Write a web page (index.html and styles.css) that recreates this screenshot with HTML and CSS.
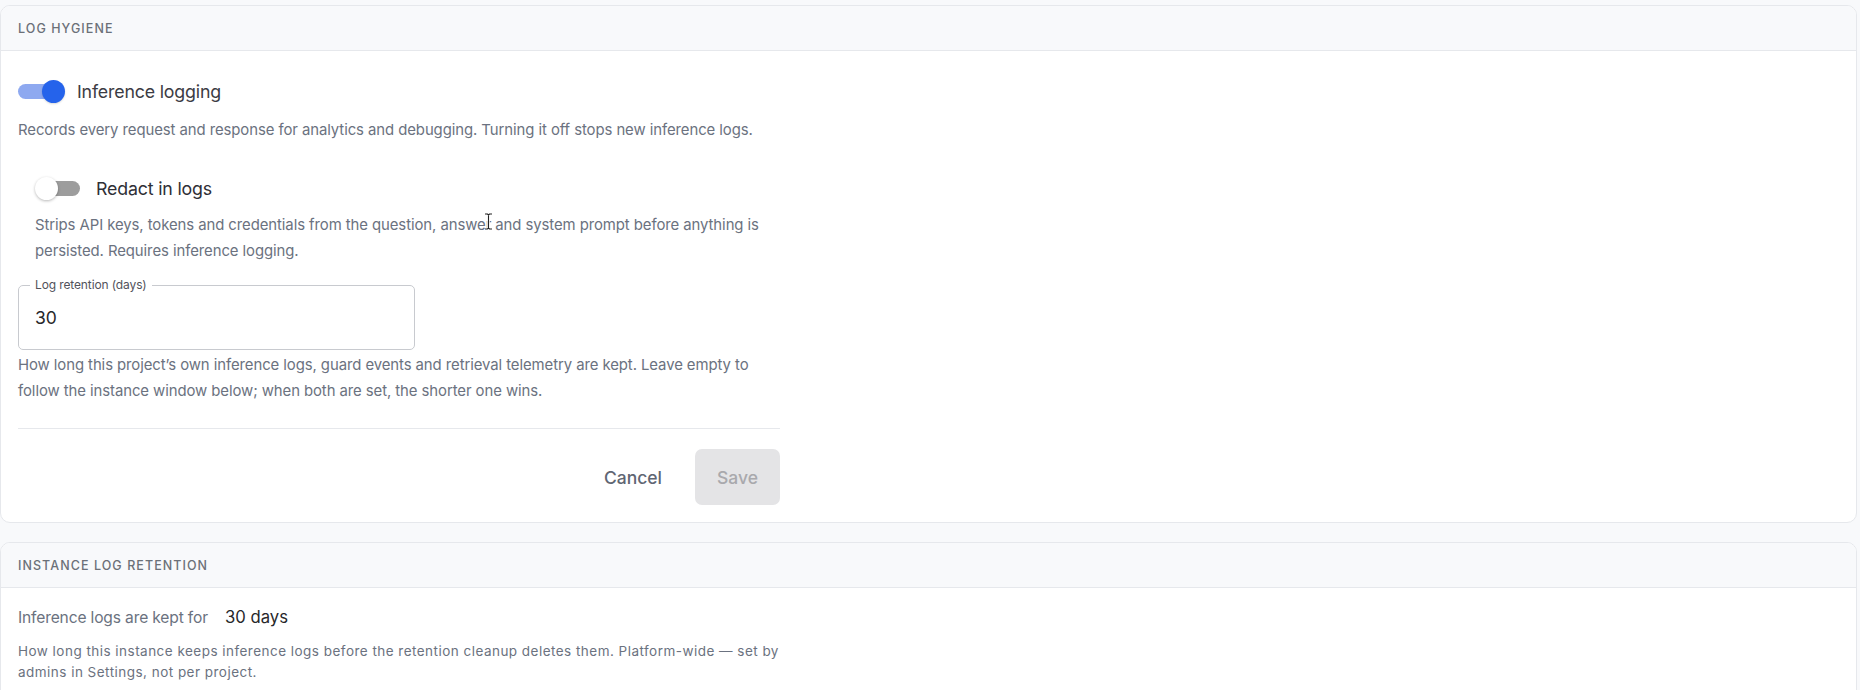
FILE: index.html
```html
<!DOCTYPE html>
<html lang="en">
<head>
<meta charset="utf-8">
<title>Log hygiene</title>
<link rel="stylesheet" href="styles.css">
</head>
<body>
<section class="card card-first">
  <header class="card-head">Log hygiene</header>
  <div class="card-body">
    <div class="col">
      <label class="switch-row">
        <span class="switch on"><span class="track"></span><span class="knob"></span></span>
        <span class="switch-label">Inference logging</span>
      </label>
      <p class="desc desc-main">Records every request and response for analytics and debugging. Turning it off stops new inference logs.</p>

      <div class="sub">
        <label class="switch-row">
          <span class="switch off"><span class="track"></span><span class="knob"></span></span>
          <span class="switch-label sub-label">Redact in logs</span>
        </label>
        <p class="desc desc-sub">Strips API keys, tokens and credentials from the question, answer and system prompt before anything is persisted. Requires inference logging.</p>
      </div>

      <fieldset class="field">
        <legend>Log retention (days)</legend>
        <input class="field-input" type="text" value="30">
      </fieldset>
      <p class="desc help">How long this project’s own inference logs, guard events and retrieval telemetry are kept. Leave empty to follow the instance window below; when both are set, the shorter one wins.</p>

      <div class="actions">
        <button class="btn btn-cancel" type="button">Cancel</button>
        <button class="btn btn-save" type="button" disabled>Save</button>
      </div>
    </div>
  </div>
</section>

<section class="card card-second">
  <header class="card-head">Instance log retention</header>
  <div class="card-body body-second">
    <div class="kept"><span class="kept-label">Inference logs are kept for</span><span class="kept-value">30 days</span></div>
    <p class="small">How long this instance keeps inference logs before the retention cleanup deletes them. Platform-wide — set by admins in Settings, not per project.</p>
  </div>
</section>

<svg class="cursor" width="9" height="17" viewBox="0 0 9 17" aria-hidden="true">
  <path d="M1 1h2.5L4.5 2l1-1H8M4.5 2v13M1 16h2.5l1-1 1 1H8" fill="none" stroke="#ffffff" stroke-width="2.6"/>
  <path d="M1 1h2.5L4.5 2l1-1H8M4.5 2v13M1 16h2.5l1-1 1 1H8" fill="none" stroke="#222222" stroke-width="1.1"/>
</svg>
</body>
</html>
```

FILE: styles.css
```css
* { box-sizing: border-box; }

html, body {
  margin: 0;
  padding: 0;
}

body {
  position: relative;
  background: #f8f9fb;
  font-family: Inter, "Noto Sans", "Liberation Sans", sans-serif;
  color: #3f3f46;
  width: 1860px;
  height: 690px;
  overflow: hidden;
}

.card {
  background: #ffffff;
  border: 1px solid #e6e8ec;
  border-radius: 10px;
  width: 1857px;
  overflow: hidden;
}

.card-first { margin-top: 5px; }
.card-second { margin-top: 19px; }

.card-head {
  height: 45px;
  background: #f8f9fb;
  border-bottom: 1px solid #e6e8ec;
  padding-left: 17px;
  display: flex;
  align-items: center;
  font-size: 12.5px;
  font-weight: 500;
  letter-spacing: 0.085em;
  text-transform: uppercase;
  color: #6b7078;
}

.card-body {
  padding: 29px 17px 17px;
}

.col {
  width: 762px;
}

.switch-row {
  display: flex;
  align-items: center;
  height: 23px;
}

.switch {
  position: relative;
  width: 47px;
  height: 23px;
  flex: none;
  margin-right: 12px;
}

.switch .track {
  position: absolute;
  left: 0;
  right: 3px;
  top: 4px;
  height: 15px;
  border-radius: 8px;
}

.switch .knob {
  position: absolute;
  top: 0;
  width: 23px;
  height: 23px;
  border-radius: 50%;
}

.switch.on .track { background: #8ea9f0; }
.switch.on .knob { right: 0; background: #2563eb; box-shadow: 0 1px 2px rgba(0,0,0,0.15); }

.switch.off { width: 45px; margin-right: 16px; }
.switch.off .track { left: 4px; right: 0; background: #9d9d9d; }
.switch.off .knob { left: 0; background: #ffffff; box-shadow: 0 1px 3px rgba(0,0,0,0.28); }

.switch-label {
  font-size: 17.8px;
  color: #3c3c44;
  letter-spacing: -0.01em;
}

.sub-label { color: #2f2f36; }

.desc {
  margin: 0;
  font-size: 14.9px;
  line-height: 26px;
  color: #6b7280;
  letter-spacing: -0.005em;
}

.desc-main { margin-top: 14px; }

.sub {
  margin-top: 34px;
  padding-left: 17px;
}

.desc-sub { margin-top: 12px; }

.field {
  margin: 14px 0 0;
  width: 397px;
  height: 72px;
  border: 1px solid #c8cacf;
  border-radius: 5px;
  padding: 0 11px;
}

.field legend {
  padding: 0 5px;
  font-size: 12px;
  line-height: 14px;
  color: #52525b;
  letter-spacing: -0.01em;
}

.field-input {
  display: block;
  width: 100%;
  border: 0;
  outline: 0;
  background: transparent;
  padding: 15px 5px 0;
  font-family: inherit;
  font-size: 17.5px;
  color: #27272a;
}

.help { margin-top: 2px; }

.actions {
  margin-top: 24px;
  border-top: 1px solid #e6e8ec;
  padding-top: 20px;
  display: flex;
  justify-content: flex-end;
  gap: 12px;
}

.btn {
  height: 56px;
  border: 0;
  border-radius: 7px;
  font-family: inherit;
  font-size: 17.5px;
  font-weight: 500;
  padding: 0 21px;
  background: transparent;
}

.btn-cancel { color: #5f6673; }

.btn-save {
  width: 85px;
  padding: 0;
  background: #e4e4e6;
  color: #a9a9ad;
}

.body-second {
  padding: 19px 17px 40px;
}

.kept {
  display: flex;
  align-items: baseline;
}

.kept-label {
  font-size: 15.6px;
  color: #6b7280;
  letter-spacing: -0.01em;
}

.kept-value {
  margin-left: 17px;
  font-size: 16.7px;
  color: #27272a;
}

.small {
  margin: 14px 0 0;
  width: 770px;
  font-size: 13.5px;
  line-height: 21px;
  letter-spacing: 0.035em;
  color: #6b7280;
}

.cursor {
  position: absolute;
  left: 484px;
  top: 213px;
}
```
